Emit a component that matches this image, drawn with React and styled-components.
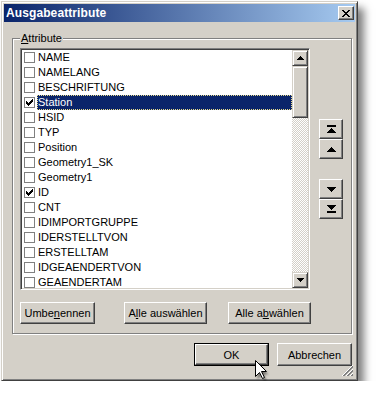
import React from "react";
import styled, { createGlobalStyle } from "styled-components";

const GlobalStyle = createGlobalStyle`
  html, body { margin: 0; padding: 0; background: #fff; }
  body { font-family: "Liberation Sans", Arial, sans-serif; font-size: 11px; color: #000; }
`;

const Window = styled.div`
  position: relative;
  margin: 1px 0 0 1px;
  width: 357px;
  height: 380px;
  box-sizing: border-box;
  background: #d4d0c8;
  border: 1px solid;
  border-color: #d4d0c8 #404040 #404040 #d4d0c8;
  box-shadow: inset 1px 1px 0 #fff, inset -1px -1px 0 #808080, 6px 7px 8px rgba(0, 0, 0, 0.5);
  padding: 2px;
  display: flex;
  flex-direction: column;
`;

const TitleBar = styled.div`
  height: 18px;
  flex: none;
  background: linear-gradient(to right, #0a246a, #a6caf0);
  display: flex;
  align-items: center;
  justify-content: space-between;
  padding: 0 1px 0 2px;
`;

const Title = styled.span`
  color: #fff;
  font-weight: bold;
  font-size: 12px;
  letter-spacing: 0.1px;
`;

const CloseButton = styled.div`
  width: 16px;
  height: 14px;
  box-sizing: border-box;
  background: #d4d0c8;
  border: 1px solid;
  border-color: #fff #404040 #404040 #fff;
  box-shadow: inset -1px -1px 0 #808080;
  display: flex;
  align-items: center;
  justify-content: center;
`;

const Content = styled.div`
  flex: 1;
  display: flex;
  flex-direction: column;
  padding: 10px 3px 0 8px;
`;

const GroupBox = styled.fieldset`
  margin: 0;
  width: 340px;
  box-sizing: border-box;
  padding: 3px 7px 9px 7px;
  border: 1px solid #808080;
  box-shadow: 1px 1px 0 #fff, inset 1px 1px 0 #fff;
  display: flex;
  flex-direction: column;
`;

const Legend = styled.legend`
  padding: 0 1px;
  margin: 0;
  font-size: 11px;
  line-height: 13px;
  background: #d4d0c8;
`;

const TopRow = styled.div`
  display: flex;
  gap: 9px;
`;

const ListBox = styled.div`
  width: 290px;
  height: 242px;
  box-sizing: border-box;
  background: #fff;
  border: 1px solid;
  border-color: #808080 #fff #fff #808080;
  box-shadow: inset 1px 1px 0 #404040, inset -1px -1px 0 #d4d0c8;
  padding: 1px;
  display: flex;
  overflow: hidden;
`;

const Items = styled.div`
  flex: 1;
  display: flex;
  flex-direction: column;
  overflow: hidden;
`;

const Row = styled.div`
  flex: none;
  height: 15px;
  display: flex;
  align-items: center;
  padding-left: 2px;
`;

const Check = styled.div`
  width: 11px;
  height: 11px;
  box-sizing: border-box;
  border: 1px solid #808080;
  background: #fff;
  margin-right: 2px;
  display: flex;
  align-items: center;
  justify-content: center;
  flex: none;
`;

const ItemLabel = styled.div`
  flex: 1;
  height: 15px;
  box-sizing: border-box;
  line-height: 13px;
  white-space: nowrap;
  font-size: 11px;
  background: ${(p) => (p.$selected ? "#0a246a" : "transparent")};
  color: ${(p) => (p.$selected ? "#fff" : "#000")};
  border: 1px ${(p) => (p.$selected ? "dotted #e8dc8a" : "solid transparent")};
`;

const ScrollBar = styled.div`
  width: 16px;
  flex: none;
  display: flex;
  flex-direction: column;
  background: repeating-conic-gradient(#d4d0c8 0% 25%, #fff 0% 50%) 0 0 / 2px 2px;
`;

const ScrollTrack = styled.div`
  flex: 1;
`;

const RaisedBox = styled.div`
  flex: none;
  width: 16px;
  height: ${(p) => p.$h || 16}px;
  box-sizing: border-box;
  background: #d4d0c8;
  border: 1px solid;
  border-color: #d4d0c8 #404040 #404040 #d4d0c8;
  box-shadow: inset 1px 1px 0 #fff, inset -1px -1px 0 #808080;
  display: flex;
  align-items: center;
  justify-content: center;
`;

const SideColumn = styled.div`
  display: flex;
  flex-direction: column;
  padding-top: 71px;
`;

const SideButton = styled.div`
  width: 24px;
  height: 20px;
  box-sizing: border-box;
  margin-top: ${(p) => (p.$gapBefore ? 20 : 0)}px;
  background: #d4d0c8;
  border: 1px solid;
  border-color: #fff #404040 #404040 #fff;
  box-shadow: inset -1px -1px 0 #808080;
  display: flex;
  align-items: center;
  justify-content: center;
`;

const ButtonRow = styled.div`
  display: flex;
  margin-top: 12px;
`;

const PushButton = styled.div`
  width: ${(p) => p.$w}px;
  height: ${(p) => p.$h || 22}px;
  margin-left: ${(p) => p.$ml || 0}px;
  box-sizing: border-box;
  background: #d4d0c8;
  border: 1px solid;
  border-color: #fff #404040 #404040 #fff;
  box-shadow: inset -1px -1px 0 #808080, inset 1px 1px 0 #d4d0c8;
  display: flex;
  align-items: center;
  justify-content: center;
  font-size: 11px;
  white-space: nowrap;
`;

const DefaultFrame = styled.div`
  border: 1px solid #000;
  display: flex;
`;

const DialogButtons = styled.div`
  display: flex;
  justify-content: flex-end;
  gap: 8px;
  margin-top: 9px;
`;

const Cursor = styled.svg`
  position: absolute;
  left: 252px;
  top: 357px;
`;

const Grip = styled.svg`
  position: absolute;
  right: 3px;
  bottom: 3px;
`;

const items = [
  ["NAME", false],
  ["NAMELANG", false],
  ["BESCHRIFTUNG", false],
  ["Station", true, true],
  ["HSID", false],
  ["TYP", false],
  ["Position", false],
  ["Geometry1_SK", false],
  ["Geometry1", false],
  ["ID", true],
  ["CNT", false],
  ["IDIMPORTGRUPPE", false],
  ["IDERSTELLTVON", false],
  ["ERSTELLTAM", false],
  ["IDGEAENDERTVON", false],
  ["GEAENDERTAM", false],
];

const CheckMark = () => (
  <svg width="7" height="7" viewBox="0 0 7 7" shapeRendering="crispEdges">
    <path d="M6 0h1v3h-1v1h-1v1h-1v1h-1v1h-1v-1h-1v-1h-1v-3h1v1h1v1h1v-1h1v-1h1z" fill="#000" />
  </svg>
);

const TriUp = () => (
  <svg width="7" height="4" viewBox="0 0 7 4" shapeRendering="crispEdges">
    <path d="M3 0h1v1h1v1h1v1h1v1h-7v-1h1v-1h1v-1h1z" fill="#000" />
  </svg>
);

const TriDown = () => (
  <svg width="7" height="4" viewBox="0 0 7 4" shapeRendering="crispEdges">
    <path d="M0 0h7v1h-1v1h-1v1h-1v1h-1v-1h-1v-1h-1v-1h-1z" fill="#000" />
  </svg>
);

const BigUp = () => (
  <svg width="9" height="5" viewBox="0 0 9 5" shapeRendering="crispEdges">
    <path d="M4 0h1v1h1v1h1v1h1v1h1v1h-9v-1h1v-1h1v-1h1v-1h1z" fill="#000" />
  </svg>
);

const BigDown = () => (
  <svg width="9" height="5" viewBox="0 0 9 5" shapeRendering="crispEdges">
    <path d="M0 0h9v1h-1v1h-1v1h-1v1h-1v1h-1v-1h-1v-1h-1v-1h-1v-1h-1z" fill="#000" />
  </svg>
);

const TopIcon = () => (
  <svg width="9" height="8" viewBox="0 0 9 8" shapeRendering="crispEdges">
    <rect x="0" y="0" width="9" height="2" fill="#000" />
    <path d="M4 3h1v1h1v1h1v1h1v1h1v1h-9v-1h1v-1h1v-1h1v-1h1z" fill="#000" />
  </svg>
);

const BottomIcon = () => (
  <svg width="9" height="8" viewBox="0 0 9 8" shapeRendering="crispEdges">
    <path d="M0 0h9v1h-1v1h-1v1h-1v1h-1v1h-1v-1h-1v-1h-1v-1h-1v-1h-1z" fill="#000" />
    <rect x="0" y="6" width="9" height="2" fill="#000" />
  </svg>
);

const CloseX = () => (
  <svg width="8" height="7" viewBox="0 0 8 7" shapeRendering="crispEdges">
    <path d="M0 0h2v1h1v1h2v-1h1v-1h2v1h-1v1h-1v1h-1v1h1v1h1v1h1v1h-2v-1h-1v-1h-2v1h-1v1h-2v-1h1v-1h1v-1h1v-1h-1v-1h-1v-1h-1z" fill="#000" />
  </svg>
);

export default function App() {
  return (
    <>
      <GlobalStyle />
      <Window>
        <TitleBar>
          <Title>Ausgabeattribute</Title>
          <CloseButton>
            <CloseX />
          </CloseButton>
        </TitleBar>
        <Content>
          <GroupBox>
            <Legend>
              <u>A</u>ttribute
            </Legend>
            <TopRow>
              <ListBox>
                <Items>
                  {items.map(([name, checked, selected]) => (
                    <Row key={name}>
                      <Check>{checked && <CheckMark />}</Check>
                      <ItemLabel $selected={selected}>{name}</ItemLabel>
                    </Row>
                  ))}
                </Items>
                <ScrollBar>
                  <RaisedBox>
                    <TriUp />
                  </RaisedBox>
                  <RaisedBox $h={52} />
                  <ScrollTrack />
                  <RaisedBox>
                    <TriDown />
                  </RaisedBox>
                </ScrollBar>
              </ListBox>
              <SideColumn>
                <SideButton>
                  <TopIcon />
                </SideButton>
                <SideButton>
                  <BigUp />
                </SideButton>
                <SideButton $gapBefore>
                  <BigDown />
                </SideButton>
                <SideButton>
                  <BottomIcon />
                </SideButton>
              </SideColumn>
            </TopRow>
            <ButtonRow>
              <PushButton $w={75}>
                Umbe<u>n</u>ennen
              </PushButton>
              <PushButton $w={83} $ml={29}>
                A<u>l</u>le auswählen
              </PushButton>
              <PushButton $w={83} $ml={21}>
                Alle a<u>b</u>wählen
              </PushButton>
            </ButtonRow>
          </GroupBox>
          <DialogButtons>
            <DefaultFrame>
              <PushButton $w={73} $h={21}>OK</PushButton>
            </DefaultFrame>
            <PushButton $w={75} $h={23}>Abbrechen</PushButton>
          </DialogButtons>
        </Content>
        <Grip width="12" height="12" viewBox="0 0 12 12" shapeRendering="crispEdges">
          <path d="M11 0L0 11" stroke="#fff" />
          <path d="M11 1L1 11M11 2L2 11" stroke="#808080" />
          <path d="M11 4L4 11" stroke="#fff" />
          <path d="M11 5L5 11M11 6L6 11" stroke="#808080" />
          <path d="M11 8L8 11" stroke="#fff" />
          <path d="M11 9L9 11M11 10L10 11" stroke="#808080" />
        </Grip>
        <Cursor width="18" height="26" viewBox="0 0 18 26">
          <defs>
            <filter id="cs" x="-50%" y="-50%" width="200%" height="200%">
              <feGaussianBlur stdDeviation="1.2" />
            </filter>
          </defs>
          <path
            d="M3.5 4.5 L3.5 20.5 L7.5 16.5 L10.5 22.5 L12.5 21.5 L9.5 15.5 L14.5 15.5 Z"
            fill="rgba(0,0,0,0.45)"
            filter="url(#cs)"
          />
          <path
            d="M1.5 1.5 L1.5 17.5 L5.5 13.5 L8.5 19.5 L10.5 18.5 L7.5 12.5 L12.5 12.5 Z"
            fill="#fff"
            stroke="#000"
            strokeWidth="1"
            strokeLinejoin="miter"
          />
        </Cursor>
      </Window>
    </>
  );
}
